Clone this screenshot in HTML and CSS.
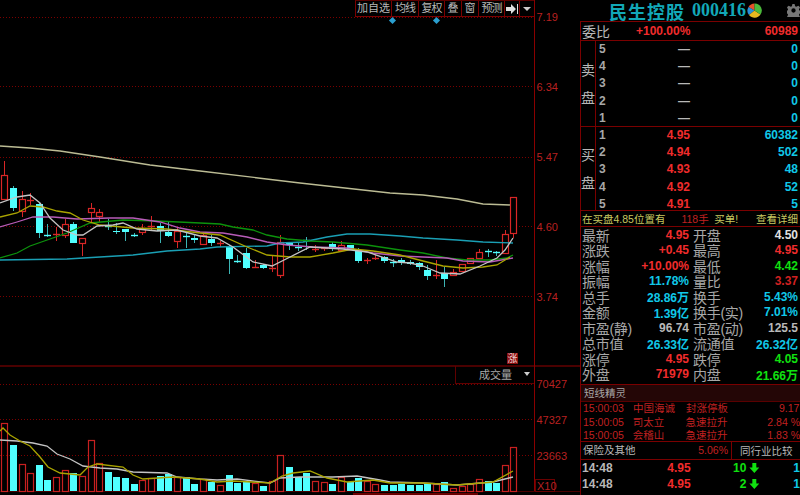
FILE: index.html
```html
<!DOCTYPE html>
<html lang="en">
<head>
  <meta charset="UTF-8" />
  <title>民生控股 000416</title>
  <link rel="stylesheet" href="styles.css">
</head>
<body>
  <div class="chart-area">
    <svg class="chart" id="chart" width="580" height="495" viewBox="0 0 580 495" aria-label="K线图"></svg>

    <div class="toolbar">
      <span class="tool tool-add">加自选</span>
      <span class="tool tool-ma">均线</span>
      <span class="tool tool-ma">复权</span>
      <span class="tool tool-s">叠</span>
      <span class="tool tool-s">窗</span>
      <span class="tool tool-ma">预测</span>
      <span class="tool tool-arrow">
        <svg width="12" height="10" viewBox="0 0 12 10"><path d="M0 3h5V0l5 5-5 5V7H0z" fill="#ddd"/><path d="M11 0h1v10h-1z" fill="#ddd"/></svg>
      </span>
      <span class="tool tool-menu"><i class="caret"></i></span>
    </div>

    <span class="diamond diamond-a"></span>
    <span class="diamond diamond-b"></span>
    <span class="limit-badge">涨</span>
    <div class="vol-select">成交量<i class="caret"></i></div>
  </div>

  <aside class="panel">
    <header class="panel-head">
      <span class="stock-name">民生控股</span>
      <span class="stock-code">000416</span>
      <svg class="pie" width="15" height="15" viewBox="0 0 30 30">
        <path d="M15 15L15 1A14 14 0 0 0 3 8z" fill="#e8502a"/>
        <path d="M15 15L3 8A14 14 0 0 0 4 24z" fill="#2a8fd8"/>
        <path d="M15 15L4 24A14 14 0 0 0 27 23z" fill="#e8b820"/>
        <path d="M15 15L27 23A14 14 0 0 0 15 1z" fill="#4ab83a"/>
      </svg>
      <svg class="gear" width="13" height="13" viewBox="0 0 24 24">
        <path fill="#777" d="M10 0h4l1 4 2 1 4-2 3 3-2 4 1 2 4 1v4l-4 1-1 2 2 4-3 3-4-2-2 1-1 4h-4l-1-4-2-1-4 2-3-3 2-4-1-2-4-1v-4l4-1 1-2-2-4 3-3 4 2 2-1zM12 8a4 4 0 1 0 0 8 4 4 0 0 0 0-8z"/>
      </svg>
    </header>

    <div class="ratio-row">
      <span class="ratio-label">委比</span>
      <span class="num red ratio-pct">+100.00%</span>
      <span class="num red ratio-val">60989</span>
    </div>

    <section class="book book-sell">
      <div class="book-side"><span>卖</span><span>盘</span></div>
      <div class="book-rows">
        <div class="book-row"><span class="idx">5</span><span class="num gray price">—</span><span class="num cyan qty">0</span></div>
        <div class="book-row"><span class="idx">4</span><span class="num gray price">—</span><span class="num cyan qty">0</span></div>
        <div class="book-row"><span class="idx">3</span><span class="num gray price">—</span><span class="num cyan qty">0</span></div>
        <div class="book-row"><span class="idx">2</span><span class="num gray price">—</span><span class="num cyan qty">0</span></div>
        <div class="book-row"><span class="idx">1</span><span class="num gray price">—</span><span class="num cyan qty">0</span></div>
      </div>
    </section>

    <section class="book book-buy">
      <div class="book-side"><span>买</span><span>盘</span></div>
      <div class="book-rows">
        <div class="book-row"><span class="idx">1</span><span class="num red price">4.95</span><span class="num cyan qty">60382</span></div>
        <div class="book-row"><span class="idx">2</span><span class="num red price">4.94</span><span class="num cyan qty">502</span></div>
        <div class="book-row"><span class="idx">3</span><span class="num red price">4.93</span><span class="num cyan qty">48</span></div>
        <div class="book-row"><span class="idx">4</span><span class="num red price">4.92</span><span class="num cyan qty">52</span></div>
        <div class="book-row"><span class="idx">5</span><span class="num red price">4.91</span><span class="num cyan qty">5</span></div>
      </div>
    </section>

    <div class="notice">
      <span class="notice-a">在买盘4.85位置有</span>
      <span class="notice-b">118手</span>
      <span class="notice-c">买单!</span>
      <span class="notice-d">查看详细</span>
    </div>

    <section class="stats">
      <div class="stat"><span class="stat-label">最新</span><span class="num red">4.95</span></div>
      <div class="stat"><span class="stat-label">开盘</span><span class="num white">4.50</span></div>
      <div class="stat"><span class="stat-label">涨跌</span><span class="num red">+0.45</span></div>
      <div class="stat"><span class="stat-label">最高</span><span class="num red">4.95</span></div>
      <div class="stat"><span class="stat-label">涨幅</span><span class="num red">+10.00%</span></div>
      <div class="stat"><span class="stat-label">最低</span><span class="num green">4.42</span></div>
      <div class="stat"><span class="stat-label">振幅</span><span class="num cyan">11.78%</span></div>
      <div class="stat"><span class="stat-label">量比</span><span class="num dim-red">3.37</span></div>
      <div class="stat"><span class="stat-label">总手</span><span class="num cyan">28.86万</span></div>
      <div class="stat"><span class="stat-label">换手</span><span class="num cyan">5.43%</span></div>
      <div class="stat"><span class="stat-label">金额</span><span class="num cyan">1.39亿</span></div>
      <div class="stat"><span class="stat-label">换手(实)</span><span class="num cyan">7.01%</span></div>
      <div class="stat"><span class="stat-label">市盈(静)</span><span class="num gray">96.74</span></div>
      <div class="stat"><span class="stat-label">市盈(动)</span><span class="num gray">125.5</span></div>
      <div class="stat"><span class="stat-label">总市值</span><span class="num cyan">26.33亿</span></div>
      <div class="stat"><span class="stat-label">流通值</span><span class="num cyan">26.32亿</span></div>
      <div class="stat"><span class="stat-label">涨停</span><span class="num red">4.95</span></div>
      <div class="stat"><span class="stat-label">跌停</span><span class="num green">4.05</span></div>
      <div class="stat"><span class="stat-label">外盘</span><span class="num red">71979</span></div>
      <div class="stat"><span class="stat-label">内盘</span><span class="num green">21.66万</span></div>
    </section>

    <section class="sprite">
      <div class="sprite-title">短线精灵</div>
      <div class="sprite-row"><span class="s-time">15:00:03</span><span class="s-name">中国海诚</span><span class="s-event">封涨停板</span><span class="s-val s-val-first">9.17</span></div>
      <div class="sprite-row"><span class="s-time">15:00:05</span><span class="s-name">司太立</span><span class="s-event">急速拉升</span><span class="s-val">2.84 %</span></div>
      <div class="sprite-row"><span class="s-time">15:00:05</span><span class="s-name">会稽山</span><span class="s-event">急速拉升</span><span class="s-val">1.83 %</span></div>
    </section>

    <div class="tabs">
      <div class="tab-sector"><span>保险及其他</span><span class="sector-pct">5.06%</span></div>
      <div class="tab-peer">同行业比较</div>
    </div>

    <section class="ticks">
      <div class="tick"><span class="t-time">14:48</span><span class="num red t-price">4.95</span><span class="num green t-vol">10</span><i class="down"></i><span class="num cyan t-n">1</span></div>
      <div class="tick"><span class="t-time">14:48</span><span class="num red t-price">4.95</span><span class="num green t-vol">2</span><i class="down"></i><span class="num cyan t-n">1</span></div>
      <div class="tick"><span class="t-time">14:48</span><span class="num red t-price">4.95</span><span class="num green t-vol">1</span><i class="down"></i><span class="num cyan t-n">1</span></div>
    </section>
  </aside>

  <script src="chart.js"></script>
</body>
</html>
```
FILE: styles.css
```css
* {
  box-sizing: border-box;
  margin: 0;
  padding: 0;
}
html, body {
  height: 495px;
  overflow: hidden;
}
body {
  background: #000;
  color: #b8b8b8;
  font-family: "Liberation Sans", "Noto Sans CJK SC", sans-serif;
  font-size: 12px;
  display: flex;
}

/* Chart side */
.chart-area {
  position: relative;
  width: 580px;
  height: 495px;
  flex-shrink: 0;
}
.chart {
  display: block;
}
.toolbar {
  position: absolute;
  top: 0;
  left: 355px;
  width: 179px;
  height: 17px;
  display: flex;
  border-top: 1px solid #5a0000;
  border-left: 1px solid #7a0000;
  border-bottom: 1px solid #7a0000;
  background: #000;
}
.tool {
  height: 15px;
  line-height: 15px;
  font-size: 11px;
  color: #b8b8b8;
  text-align: center;
  border-right: 1px solid #7a0000;
  white-space: nowrap;
  overflow: hidden;
  display: flex;
  align-items: center;
  justify-content: center;
}
.tool-add { width: 36px; }
.tool-ma { width: 27px; letter-spacing: -1px; }
.tool-s { width: 17px; }
.tool-arrow { width: 15px; }
.tool-menu { width: 13px; border-right: 0; }
.tool:nth-child(3) { width: 26px; }
.tool:nth-child(6) { width: 26px; }
.caret {
  display: inline-block;
  width: 0;
  height: 0;
  border-left: 4px solid transparent;
  border-right: 4px solid transparent;
  border-top: 4px solid #ccc;
}
.diamond {
  position: absolute;
  top: 18px;
  width: 5px;
  height: 5px;
  background: #2a9fd0;
  transform: rotate(45deg);
}
.diamond-a { left: 390px; }
.diamond-b { left: 434px; }
.limit-badge {
  position: absolute;
  left: 507px;
  top: 353px;
  width: 11px;
  height: 11px;
  line-height: 11px;
  font-size: 10px;
  text-align: center;
  color: #f0d0d0;
  background: #8a1010;
}
.vol-select {
  position: absolute;
  left: 455px;
  top: 366px;
  width: 79px;
  height: 18px;
  line-height: 18px;
  padding-left: 23px;
  font-size: 11px;
  color: #a8a8a8;
  border-left: 1px solid #600000;
  border-bottom: 1px solid #600000;
}
.vol-select .caret {
  position: absolute;
  left: 68px;
  top: 6px;
  border-left-width: 3px;
  border-right-width: 3px;
}

/* Quote panel */
.panel {
  width: 220px;
  height: 495px;
  overflow: hidden;
  flex-shrink: 0;
}
.panel-head {
  height: 21px;
  display: flex;
  align-items: center;
  padding-left: 29px;
  position: relative;
}
.stock-name {
  font-size: 18px;
  font-weight: 700;
  letter-spacing: 1px;
  color: #12a8b8;
  width: 83px;
  white-space: nowrap;
}
.stock-code {
  font-family: "Liberation Serif", serif;
  font-size: 18px;
  font-weight: 700;
  color: #12a8b8;
  width: 55px;
}
.pie {
  margin-top: -1px;
}
.gear {
  margin-left: 25px;
}
.ratio-row {
  height: 20px;
  display: flex;
  align-items: center;
  border: 1px solid #7a0000;
  border-right: 0;
  padding-right: 2px;
}
.ratio-label {
  font-size: 14px;
  width: 55px;
  padding-left: 1px;
}
.ratio-pct { width: 55px; }
.ratio-val { margin-left: auto; }
.num {
  font-weight: 700;
  font-size: 12px;
  white-space: nowrap;
}
.red { color: #f02c2c; }
.dim-red { color: #d02020; }
.cyan { color: #10c8e8; }
.green { color: #10e010; }
.white { color: #e0e0e0; }
.gray { color: #b8b8b8; }

.book {
  display: flex;
  border-left: 1px solid #7a0000;
  border-bottom: 1px solid #7a0000;
}
.book-sell { height: 86px; }
.book-buy { height: 84px; }
.book-side {
  width: 15px;
  border-right: 1px solid #7a0000;
  display: flex;
  flex-direction: column;
  align-items: center;
  justify-content: center;
  gap: 14px;
  font-size: 14px;
  line-height: 1;
}
.book-rows {
  flex: 1;
  display: flex;
  flex-direction: column;
}
.book-row {
  flex: none;
  height: 17.2px;
  display: flex;
  align-items: center;
  padding: 0 2px 1px 3px;
}
.idx {
  width: 20px;
  font-weight: 700;
  color: #a8a8a8;
}
.price {
  width: 71px;
  text-align: right;
}
.qty {
  margin-left: auto;
}

.notice {
  height: 16px;
  display: flex;
  align-items: center;
  font-size: 10.5px;
  border-left: 1px solid #7a0000;
  border-bottom: 1px solid #7a0000;
  padding: 0 2px 0 1px;
  color: #c8c860;
  white-space: nowrap;
}
.notice-a { width: 100px; }
.notice-b { width: 33px; color: #c02020; }
.notice-c { width: 42px; }
.notice-d { margin-left: auto; }

.stats {
  display: grid;
  grid-template-columns: 111px 1fr;
  grid-auto-rows: 15.5px;
  height: 158px;
  border-left: 1px solid #7a0000;
  border-bottom: 1px solid #7a0000;
}
.stat {
  display: flex;
  justify-content: space-between;
  align-items: center;
  padding: 0 2px 0 1px;
  white-space: nowrap;
}
.stat:nth-child(odd) {
  padding-right: 3px;
}
.stat-label {
  font-size: 14px;
  color: #a8a8a8;
  letter-spacing: -.3px;
}

.sprite {
  height: 57px;
  border-left: 1px solid #7a0000;
  border-bottom: 1px solid #7a0000;
  color: #c02020;
}
.sprite-title {
  height: 17px;
  line-height: 17px;
  padding-left: 3px;
  background: #240606;
  color: #a8a8a8;
  font-size: 10.5px;
  border-bottom: 1px solid #5a0000;
}
.sprite-row {
  height: 13.5px;
  line-height: 13.5px;
  display: flex;
  font-size: 10.5px;
  padding-left: 2px;
  white-space: nowrap;
}
.s-time { width: 50px; }
.s-name { width: 53px; }
.s-event { width: 82px; }
.s-val-first { padding-left: 11px; }

.tabs {
  height: 18px;
  display: flex;
  border-left: 1px solid #7a0000;
  border-bottom: 1px solid #7a0000;
  font-size: 10.5px;
  line-height: 17px;
}
.tab-sector {
  width: 151px;
  display: flex;
  justify-content: space-between;
  padding: 0 3px 0 2px;
  border-right: 1px solid #7a0000;
}
.sector-pct {
  color: #c02020;
}
.tab-peer {
  padding: 1px 0 0 8px;
}

.tick {
  height: 16px;
  display: flex;
  align-items: center;
  border-left: 1px solid #7a0000;
  padding-left: 1px;
}
.t-time {
  width: 62px;
  font-weight: 700;
  font-size: 12px;
  color: #b8b8b8;
}
.t-price {
  width: 47px;
  text-align: right;
}
.t-vol {
  width: 56px;
  text-align: right;
}
.down {
  width: 10px;
  height: 10px;
  margin: 0 34px 0 3px;
  background: #10e010;
  clip-path: polygon(30% 0, 70% 0, 70% 45%, 100% 45%, 50% 100%, 0 45%, 30% 45%);
}
.t-n {
  flex-shrink: 0;
}
```
FILE: chart.js
```js
// Kline data, one row per day: [r|c, high, bodyTop, bodyBottom, low, volumeTop]
const days = [
  ["r",161,175,199,199,423],["c",186,188,208,211,445],["r",191,199,211,217,464],["r",193,200,200,205,473],
  ["c",202,204,233,238,465],["c",224,235,235,237,480],["r",227,234,234,241,477],["r",219,224,235,238,470],
  ["c",222,224,243,243,473],["r",238,238,243,256,476],["r",203,208,212,223,440],["r",209,212,216,222,463],
  ["c",219,226,226,230,472],["c",223,231,232,234,477],["c",229,229,232,241,478],["c",233,235,235,237,484],
  ["r",224,228,232,235,480],["r",216,226,226,230,478],["c",223,226,231,243,476],["c",222,232,236,237,474],
  ["r",228,231,241,248,477],["c",233,236,236,248,477],["c",235,238,240,243,484],["r",232,235,244,244,479],
  ["c",235,239,243,246,482],["r",241,243,243,247,485],["c",245,247,259,274,475],["c",255,261,261,263,483],
  ["c",248,253,268,269,482],["r",260,267,267,268,483],["c",264,265,268,269,486],["r",255,268,268,272,481],
  ["r",235,242,275,278,455],["c",242,243,245,250,467],["c",243,247,247,251,477],["c",237,240,240,250,473],
  ["r",245,249,249,252,481],["r",247,248,248,251,482],["c",242,244,249,251,484],["r",241,245,250,252,477],
  ["c",245,245,249,250,482],["c",248,250,261,263,478],["r",258,260,260,264,481],["r",255,258,258,260,484],
  ["c",256,257,261,263,485],["c",259,262,262,267,485],["c",258,260,262,265,484],["c",260,262,264,265,485],
  ["c",262,263,267,270,485],["c",265,270,276,280,484],["r",260,275,275,279,484],["c",267,273,279,287,482],
  ["r",269,272,275,276,488],["r",264,264,271,272,486],["r",258,258,263,264,484],["r",249,252,258,259,479],
  ["c",249,251,251,257,481],["c",251,252,252,256,483],["r",230,234,253,254,465],["r",197,197,233,238,447]
];

const lines = [
  ["#bcbc94", "0,146 30,148 60,151 100,157 150,165 200,171 300,183 390,193 423,195 457,199 483,204 510,205"],
  ["#1a9fb4", "0,260 67,259 100,257 133,255 167,251 200,249 217,247 267,246 280,243 303,242 327,237 347,234 370,234 400,236 423,238 457,240 483,242 513,243"],
  ["#0c920c", "0,258 17,253 30,246 50,239 67,233 90,223 123,220 157,221 200,223 220,224 233,227 253,230 267,235 287,239 310,241 333,242 367,245 400,250 423,253 447,258 467,260 490,260 507,258 513,255"],
  ["#b85cb8", "0,227 17,222 33,217 53,217 77,219 110,218 133,218 160,222 180,228 200,232 223,233 247,237 267,242 287,245 313,247 347,248 373,253 400,256 423,257 447,258 463,261 490,262 513,258"],
  ["#aaa400", "0,217 17,213 30,206 43,207 57,211 70,213 83,220 100,225 133,228 167,229 200,233 220,235 247,247 267,255 290,257 310,257 333,253 353,249 373,251 400,255 423,261 443,266 463,268 483,267 497,265 510,257"],
  ["#c4c4c4", "0,203 17,197 30,195 40,203 50,218 63,230 77,235 83,235 97,226 113,225 123,223 137,229 157,231 177,230 200,236 217,238 233,247 253,262 272,266 290,257 310,247 343,249 367,252 397,262 410,263 423,266 440,273 460,274 480,266 497,258 505,250 513,238"]
];

const volLines = [
  ["#c4c4c4", "0,440 17,441 33,443 47,446 57,454 70,459 83,466 100,468 117,469 133,472 167,473 177,477 200,479 217,480 237,479 270,483 280,478 300,477 313,477 333,477 357,476 380,480 390,482 423,483 457,485 493,482 513,477"],
  ["#aaa400", "0,431 3,428 10,435 20,441 30,446 40,457 48,467 60,473 80,475 88,467 97,464 123,467 133,475 143,479 173,477 200,479 217,482 233,481 270,483 282,476 293,473 310,471 327,478 347,482 373,480 390,483 423,483 457,485 493,482 513,471"]
];

const axisLabels = [
  ["7.19", 21], ["6.34", 91], ["5.47", 161], ["4.60", 231], ["3.74", 301],
  ["70427", 388], ["47327", 424], ["23663", 460]
];

const RED = "#d82626";
const CYAN = "#50ffff";
const svg = document.getElementById("chart");

function add(tag, attrs, text) {
  const el = document.createElementNS("http://www.w3.org/2000/svg", tag);
  for (const k in attrs) el.setAttribute(k, attrs[k]);
  if (text) el.textContent = text;
  svg.appendChild(el);
  return el;
}

// grid
[17, 86, 157, 226, 296, 384, 419, 455].forEach(y => {
  add("line", { x1: 0, x2: 534, y1: y + 0.5, y2: y + 0.5, stroke: "#7a0000", "stroke-dasharray": "1 2" });
});
add("rect", { x: 0, y: 365, width: 580, height: 2, fill: "#4a0000" });
add("rect", { x: 534, y: 0, width: 1, height: 492, fill: "#8a0000" });
add("rect", { x: 0, y: 491, width: 580, height: 1, fill: "#4a0000" });
add("rect", { x: 353, y: 493, width: 125, height: 2, fill: "#6a0000" });
add("rect", { x: 535.5, y: 479.5, width: 19, height: 12, fill: "none", stroke: "#6a0000" });

// candles and volume bars
days.forEach((d, i) => {
  const x = Math.round(4.3 + 8.63 * i);
  const color = d[0] === "r" ? RED : CYAN;
  const wick = d[0] === "r" ? RED : "#3cb4b4";
  const flat = d[2] === d[3];

  // wick above and below the body, hollow red bodies stay empty
  add("line", { x1: x + 0.5, x2: x + 0.5, y1: d[1], y2: d[2], stroke: wick });
  add("line", { x1: x + 0.5, x2: x + 0.5, y1: d[3], y2: d[4], stroke: wick });
  if (flat) {
    add("line", { x1: x - 3, x2: x + 4, y1: d[2] + 0.5, y2: d[2] + 0.5, stroke: color, "stroke-width": 1.4 });
  } else if (d[0] === "r") {
    add("rect", { x: x - 2.5, y: d[2] + 0.5, width: 6, height: d[3] - d[2], fill: "#000", stroke: color, "stroke-width": 1.2 });
  } else {
    add("rect", { x: x - 3, y: d[2], width: 7, height: d[3] - d[2], fill: color });
  }

  const top = d[5];
  if (d[0] === "r") {
    add("rect", { x: x - 2.5, y: top + 0.5, width: 6, height: 491 - top, fill: "none", stroke: "#c82020", "stroke-width": 1.2 });
  } else {
    add("rect", { x: x - 3, y: top, width: 7, height: 491 - top, fill: CYAN });
  }
});

// moving averages
lines.concat(volLines).forEach(l => {
  add("polyline", { points: l[1], fill: "none", stroke: l[0], "stroke-width": 1.3 });
});

// axis
axisLabels.forEach(l => {
  add("text", { x: 536.5, y: l[1], fill: "#b82020", "font-size": 11, "font-family": "Liberation Sans" }, l[0]);
});
add("text", { x: 537, y: 490, fill: "#b82020", "font-size": 11, "font-family": "Liberation Sans" }, "X10");
```
